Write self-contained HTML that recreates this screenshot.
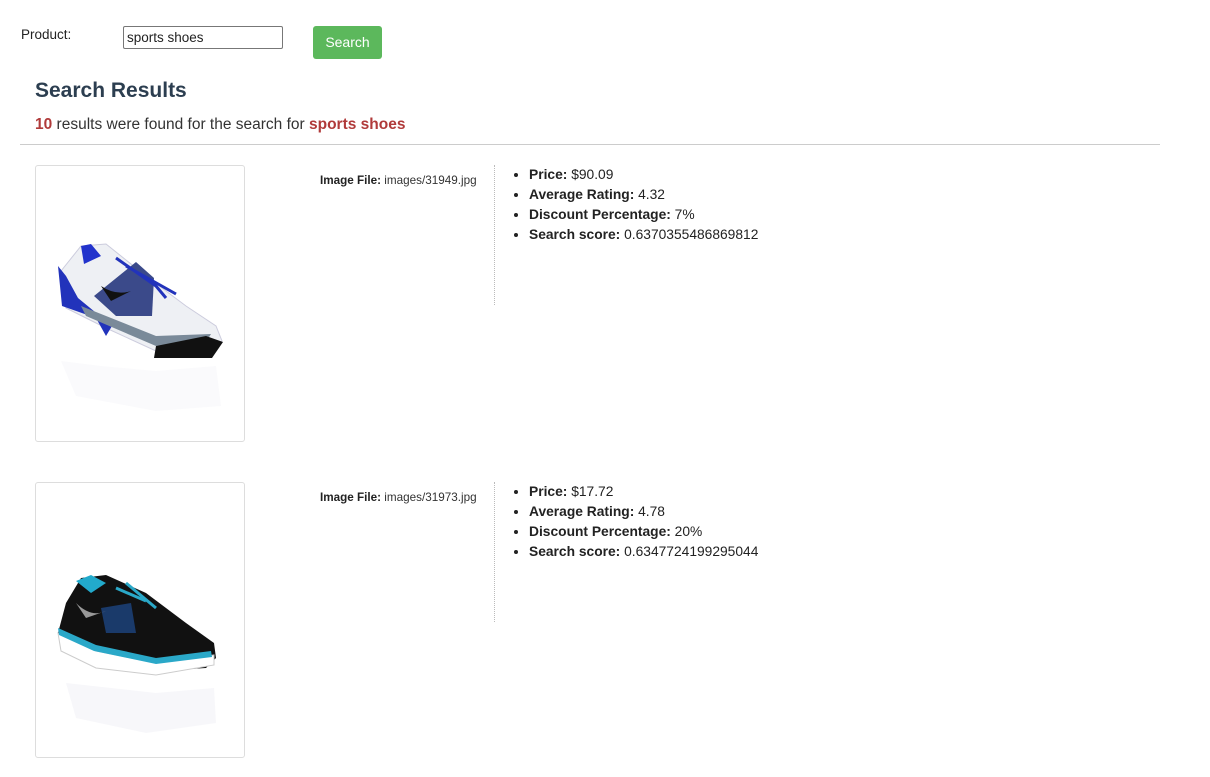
<!DOCTYPE html>
<html><head><meta charset="utf-8"><style>
body{margin:0;width:1210px;height:777px;background:#fff;font-family:"Liberation Sans",sans-serif;position:relative;overflow:hidden;color:#222}
.a{position:absolute;white-space:nowrap}
.box{position:absolute;left:35px;width:208px;border:1px solid #ddd;border-radius:3px;background:#fff}
.vl{position:absolute;left:494px;border-left:1px dotted #bbb}
.fn{font-size:11.7px;color:#333}
ul{position:absolute;margin:0;padding:0 0 0 17px;font-size:13.8px;line-height:20px;color:#222;left:512px}
b{color:#222}
</style></head><body>
<div class="a" style="left:21px;top:27px;font-size:13.5px">Product:</div>
<div class="a" style="left:123px;top:26px;width:155px;height:21px;border:1px solid #777;border-radius:2px;font-size:13.5px;line-height:21px;padding-left:3px">sports shoes</div>
<div class="a" style="left:313px;top:26px;width:69px;height:33px;background:#5cb85c;border-radius:3px;color:#fff;font-size:14px;line-height:33px;text-align:center">Search</div>
<div class="a" style="left:35px;top:79px;font-size:21px;font-weight:bold;color:#2c3e50">Search Results</div>
<div class="a" style="left:35px;top:116px;font-size:15.5px;color:#333"><b style="color:#b03a3a">10</b> results were found for the search for <b style="color:#b03a3a">sports shoes</b></div>
<div class="a" style="left:20px;top:144px;width:1140px;height:1px;background:#ccc"></div>

<div class="box" style="top:165px;height:275px">
<svg width="208" height="275" viewBox="0 0 208 275">
<g opacity="0.15"><path d="M25 195 L65 200 L120 205 L180 200 L185 240 L120 245 L40 230 Z" fill="#dde"/></g>
<path d="M25 105 L45 80 L70 78 L110 110 L150 140 L180 160 L186 175 L170 188 L120 185 L70 162 L30 142 Z" fill="#eef0f4" stroke="#ccd" stroke-width="1"/>
<path d="M22 100 L26 140 L60 152 L70 170 L76 160 L42 132 L30 110 Z" fill="#2233bb"/>
<path d="M45 80 L55 78 L65 90 L48 98 Z" fill="#2233cc"/>
<path d="M58 130 L100 96 L118 112 L116 150 L80 150 Z" fill="#3b4a8a"/>
<path d="M65 120 Q80 130 95 125 L75 135 Z" fill="#111"/>
<path d="M45 140 L120 170 L175 168 L170 176 L120 180 L50 150 Z" fill="#7a8a99"/>
<path d="M120 180 L170 170 L187 176 L176 192 L118 192 Z" fill="#111"/>
<path d="M80 92 L120 120 L130 132 M90 100 L140 128" stroke="#2233bb" stroke-width="3" fill="none"/>
</svg></div>
<div class="a fn" style="left:320px;top:174px"><b>Image File:</b> images/31949.jpg</div>
<div class="vl" style="top:165px;height:140px"></div>
<ul style="top:165px"><li><b>Price:</b> $90.09</li><li><b>Average Rating:</b> 4.32</li><li><b>Discount Percentage:</b> 7%</li><li><b>Search score:</b> 0.6370355486869812</li></ul>

<div class="box" style="top:482px;height:274px">
<svg width="208" height="274" viewBox="0 0 208 274">
<g opacity="0.15"><path d="M30 200 L120 210 L178 205 L180 240 L110 250 L40 235 Z" fill="#ccd"/></g>
<path d="M22 150 L30 120 L45 95 L70 92 L110 110 L150 140 L178 160 L180 175 L170 185 L120 188 L60 175 Z" fill="#111"/>
<path d="M40 98 L55 92 L70 100 L55 110 Z" fill="#22aacc"/>
<path d="M22 150 L60 168 L120 180 L178 172 L178 182 L120 192 L60 185 L25 168 Z" fill="#fff" stroke="#ccc" stroke-width="1"/>
<path d="M22 145 L60 162 L120 175 L175 168 L176 174 L120 181 L58 168 L23 152 Z" fill="#2aa8c8"/>
<path d="M65 125 L95 120 L100 150 L70 150 Z" fill="#1a3a6a"/>
<path d="M40 120 Q55 135 70 128 L50 135 Z" fill="#999"/>
<path d="M80 105 L110 118 M90 100 L120 125" stroke="#2aa8c8" stroke-width="3"/>
</svg></div>
<div class="a fn" style="left:320px;top:491px"><b>Image File:</b> images/31973.jpg</div>
<div class="vl" style="top:482px;height:140px"></div>
<ul style="top:482px"><li><b>Price:</b> $17.72</li><li><b>Average Rating:</b> 4.78</li><li><b>Discount Percentage:</b> 20%</li><li><b>Search score:</b> 0.6347724199295044</li></ul>
</body></html>
